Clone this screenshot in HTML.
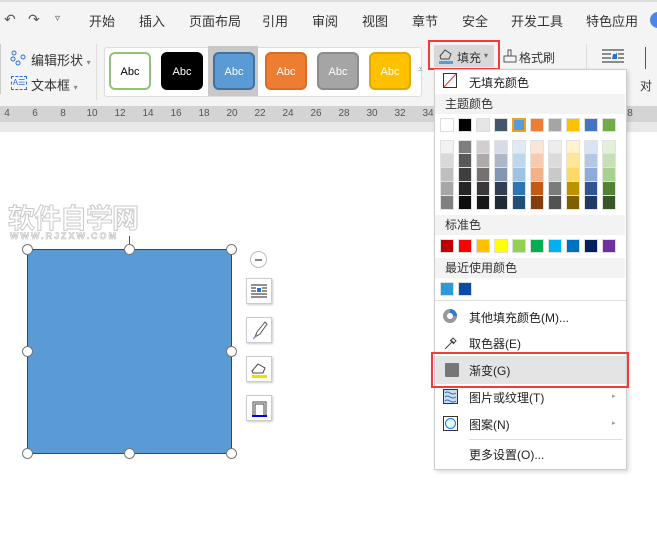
<!DOCTYPE html>
<html><head><meta charset="utf-8"><style>
*{margin:0;padding:0;box-sizing:border-box}
body{width:657px;height:546px;overflow:hidden;background:#fff;font-family:"Liberation Sans","Noto Sans CJK SC",sans-serif;font-size:12px;color:#333;position:relative}
.a{position:absolute}
.tab{position:absolute;top:11px;font-size:13px;color:#333}
.abc{position:absolute;top:52px;width:42px;height:38px;border-radius:6px;font-size:11px;text-align:center;line-height:36px;border:2px solid}
.rn{position:absolute;top:108px;font-size:10px;color:#555;width:16px;text-align:center}
.sw{position:absolute;width:14px;height:14px;border:1px solid #ddd}
.col{position:absolute;top:140px;width:14px}
.col div{height:14px;border:1px solid #e2e2e2;border-top:none}
.col div:first-child{border-top:1px solid #e2e2e2}
.hd{position:absolute;left:435px;width:190px;height:20px;background:#f3f3f3;font-size:12px;line-height:20px;padding-left:10px;color:#333}
.mi{position:absolute;left:469px;font-size:12px;color:#222}
.h{position:absolute;width:11px;height:11px;border-radius:50%;background:#fff;border:1px solid #777}
.sb{position:absolute;left:246px;width:26px;height:26px;background:#fff;border:1px solid #ccc;box-shadow:1px 1px 2px #ccc}
</style></head><body>
<div class="a" style="left:0;top:0;width:657px;height:106px;background:#f4f4f4"></div>
<div class="a" style="left:0;top:0;width:657px;height:2px;background:#ddd"></div>
<div class="tab" style="left:4px;font-size:14px;color:#555">↶</div>
<div class="tab" style="left:28px;font-size:14px;color:#555">↷</div>
<div class="tab" style="left:55px;font-size:10px;color:#555;top:13px">▿</div>
<div class="tab" style="left:89px">开始</div>
<div class="tab" style="left:139px">插入</div>
<div class="tab" style="left:189px">页面布局</div>
<div class="tab" style="left:262px">引用</div>
<div class="tab" style="left:312px">审阅</div>
<div class="tab" style="left:362px">视图</div>
<div class="tab" style="left:412px">章节</div>
<div class="tab" style="left:462px">安全</div>
<div class="tab" style="left:511px">开发工具</div>
<div class="tab" style="left:586px">特色应用</div>
<div class="a" style="left:650px;top:12px;width:16px;height:16px;border-radius:50%;background:#4a86e8"></div>
<div class="a" style="left:0;top:44px;width:1px;height:50px;background:#ccc"></div>
<svg class="a" style="left:10px;top:50px" width="16" height="16"><circle cx="4" cy="3" r="2" fill="none" stroke="#2a6fd6"/><circle cx="3" cy="9" r="2" fill="none" stroke="#2a6fd6"/><circle cx="13" cy="7" r="2" fill="none" stroke="#2a6fd6"/><circle cx="8" cy="13" r="2" fill="none" stroke="#2a6fd6"/></svg>
<div class="a" style="left:31px;top:50px;font-size:13px">编辑形状 <span style="font-size:8px;color:#888">▾</span></div>
<div class="a" style="left:11px;top:76px;width:16px;height:14px;border:1px dashed #2a6fd6;font-size:8px;color:#2a6fd6;line-height:12px;text-align:center">A☰</div>
<div class="a" style="left:31px;top:75px;font-size:13px">文本框 <span style="font-size:8px;color:#888">▾</span></div>
<div class="a" style="left:96px;top:44px;width:1px;height:56px;background:#ddd"></div>
<div class="a" style="left:104px;top:47px;width:318px;height:50px;background:#fff;border:1px solid #ddd;border-radius:3px"></div>
<div class="a" style="left:208px;top:46px;width:50px;height:50px;background:#c8c8c8"></div>
<div class="abc" style="left:109px;background:#fff;border-color:#92c27a;color:#000">Abc</div>
<div class="abc" style="left:161px;background:#000;border-color:#000;color:#fff">Abc</div>
<div class="abc" style="left:213px;background:#5b9bd5;border-color:#41719c;color:#fff">Abc</div>
<div class="abc" style="left:265px;background:#ed7d31;border-color:#d96d24;color:#fff">Abc</div>
<div class="abc" style="left:317px;background:#a5a5a5;border-color:#8c8c8c;color:#fff">Abc</div>
<div class="abc" style="left:369px;background:#ffc000;border-color:#e0a800;color:#fff">Abc</div>
<div class="a" style="left:418px;top:64px;font-size:9px;color:#888">⩡</div>
<div class="a" style="left:428px;top:40px;width:72px;height:30px;border:2px solid #f03c3c"></div>
<div class="a" style="left:434px;top:45px;width:60px;height:22px;background:#d8d8d8"></div>
<svg class="a" style="left:437px;top:47px" width="18" height="18"><path d="M3 9 L8 3 L14 7 L12 12 H4 Z" fill="none" stroke="#444"/><rect x="2" y="14" width="14" height="3" fill="#5b9bd5"/></svg>
<div class="a" style="left:457px;top:49px;font-size:12px">填充</div>
<div class="a" style="left:484px;top:51px;font-size:8px;color:#666">▾</div>
<svg class="a" style="left:502px;top:48px" width="16" height="16"><rect x="2" y="8" width="12" height="6" fill="none" stroke="#555"/><rect x="6" y="2" width="3" height="6" fill="none" stroke="#555"/></svg>
<div class="a" style="left:519px;top:49px;font-size:12px">格式刷</div>
<div class="a" style="left:586px;top:44px;width:1px;height:56px;background:#ddd"></div>
<svg class="a" style="left:601px;top:49px" width="24" height="16"><g stroke="#222"><path d="M1 1H23M1 5H10M1 9H10M1 13H23M17 5H23M17 9H23"/></g><path d="M11 10L12 5L15 5L16 3L16 10Z" fill="#2a6fd6"/></svg>
<div class="a" style="left:645px;top:47px;width:12px;height:22px;border-left:1px solid #555"></div>
<div class="a" style="left:640px;top:77px;font-size:12px">对</div>
<div class="a" style="left:0;top:106px;width:657px;height:16px;background:#d4d4d4"></div>
<div class="a" style="left:0;top:122px;width:657px;height:10px;background:#e8e8e8"></div>
<div class="rn" style="left:-1px">4</div><div class="rn" style="left:27px">6</div><div class="rn" style="left:55px">8</div><div class="rn" style="left:84px">10</div><div class="rn" style="left:112px">12</div><div class="rn" style="left:140px">14</div><div class="rn" style="left:168px">16</div><div class="rn" style="left:196px">18</div><div class="rn" style="left:224px">20</div><div class="rn" style="left:252px">22</div><div class="rn" style="left:280px">24</div><div class="rn" style="left:308px">26</div><div class="rn" style="left:336px">28</div><div class="rn" style="left:364px">30</div><div class="rn" style="left:392px">32</div><div class="rn" style="left:420px">34</div><div class="rn" style="left:622px">8</div>
<div class="a" style="left:0;top:132px;width:657px;height:414px;background:#fff"></div>
<div class="a" style="left:8px;top:197px;font-size:27px;font-weight:bold;color:#fff;-webkit-text-stroke:1px #c8c8c8;letter-spacing:-1px">软件自学网</div>
<div class="a" style="left:10px;top:231px;font-size:9px;font-weight:bold;color:#fff;-webkit-text-stroke:0.6px #bbb;letter-spacing:2px">WWW.RJZXW.COM</div>
<div class="a" style="left:129px;top:236px;width:1px;height:14px;background:#555"></div>
<div class="a" style="left:27px;top:249px;width:205px;height:205px;background:#5b9bd5;border:1px solid #2c4a6a"></div>
<div class="h" style="left:22px;top:244px"></div><div class="h" style="left:124px;top:244px"></div><div class="h" style="left:226px;top:244px"></div>
<div class="h" style="left:22px;top:346px"></div><div class="h" style="left:226px;top:346px"></div>
<div class="h" style="left:22px;top:448px"></div><div class="h" style="left:124px;top:448px"></div><div class="h" style="left:226px;top:448px"></div>
<div class="a" style="left:250px;top:251px;width:17px;height:17px;border-radius:50%;border:1px solid #bbb;background:#fff"><div style="margin:7px 4px;height:2px;background:#888"></div></div>
<div class="sb" style="top:278px"><svg width="24" height="24"><g stroke="#222"><path d="M4 6H20M4 9H9M4 12H9M4 15H20M4 18H20M15 9H20M15 12H20"/></g><rect x="10" y="9" width="4" height="4" fill="#2a6fd6"/></svg></div>
<div class="sb" style="top:317px"><svg width="24" height="24"><path d="M18 4L10 14L8 19L13 16L20 6Z" fill="none" stroke="#555"/><path d="M8 19L6 21L10 17Z" fill="#4a86e8" stroke="#4a86e8"/></svg></div>
<div class="sb" style="top:356px"><svg width="24" height="24"><path d="M5 14L11 7L18 11L16 16H6Z" fill="none" stroke="#444"/><rect x="5" y="18" width="15" height="3" fill="#f0e000"/></svg></div>
<div class="sb" style="top:395px"><svg width="24" height="24"><path d="M6 19V6H19V19M8 19V8H17V19" fill="none" stroke="#444"/><rect x="5" y="19" width="15" height="2" fill="#0000ee"/></svg></div>
<!-- menu -->
<div class="a" style="left:434px;top:69px;width:193px;height:401px;background:#fff;border:1px solid #ccc;box-shadow:2px 2px 4px rgba(0,0,0,.15)"></div>
<svg class="a" style="left:443px;top:73px" width="15" height="16"><rect x="0.5" y="0.5" width="13" height="14" fill="#fff" stroke="#333"/><path d="M13 1L1 14" stroke="#e33"/></svg>
<div class="mi" style="top:74px">无填充颜色</div>
<div class="hd" style="top:94px">主题颜色</div>
<div class="sw" style="left:440px;top:118px;background:#fff"></div>
<div class="sw" style="left:458px;top:118px;background:#000"></div>
<div class="sw" style="left:476px;top:118px;background:#e7e6e6"></div>
<div class="sw" style="left:494px;top:118px;background:#44546a"></div>
<div class="sw" style="left:512px;top:118px;background:#5b9bd5;border:2px solid #f0a020"></div>
<div class="sw" style="left:530px;top:118px;background:#ed7d31"></div>
<div class="sw" style="left:548px;top:118px;background:#a5a5a5"></div>
<div class="sw" style="left:566px;top:118px;background:#ffc000"></div>
<div class="sw" style="left:584px;top:118px;background:#4472c4"></div>
<div class="sw" style="left:602px;top:118px;background:#70ad47"></div>
<div class="col" style="left:440px"><div style="background:#f2f2f2"></div><div style="background:#d9d9d9"></div><div style="background:#bfbfbf"></div><div style="background:#a6a6a6"></div><div style="background:#808080"></div></div>
<div class="col" style="left:458px"><div style="background:#7f7f7f"></div><div style="background:#595959"></div><div style="background:#3f3f3f"></div><div style="background:#262626"></div><div style="background:#0d0d0d"></div></div>
<div class="col" style="left:476px"><div style="background:#d0cece"></div><div style="background:#aeaaaa"></div><div style="background:#757171"></div><div style="background:#3a3838"></div><div style="background:#171616"></div></div>
<div class="col" style="left:494px"><div style="background:#d6dce5"></div><div style="background:#adb9ca"></div><div style="background:#8497b0"></div><div style="background:#333f50"></div><div style="background:#222a35"></div></div>
<div class="col" style="left:512px"><div style="background:#deebf7"></div><div style="background:#bdd7ee"></div><div style="background:#9dc3e6"></div><div style="background:#2e75b6"></div><div style="background:#1f4e79"></div></div>
<div class="col" style="left:530px"><div style="background:#fbe5d6"></div><div style="background:#f8cbad"></div><div style="background:#f4b183"></div><div style="background:#c55a11"></div><div style="background:#843c0c"></div></div>
<div class="col" style="left:548px"><div style="background:#ededed"></div><div style="background:#dbdbdb"></div><div style="background:#c9c9c9"></div><div style="background:#7b7b7b"></div><div style="background:#525252"></div></div>
<div class="col" style="left:566px"><div style="background:#fff2cc"></div><div style="background:#ffe699"></div><div style="background:#ffd966"></div><div style="background:#bf9000"></div><div style="background:#7f6000"></div></div>
<div class="col" style="left:584px"><div style="background:#dae3f3"></div><div style="background:#b4c7e7"></div><div style="background:#8faadc"></div><div style="background:#2f5597"></div><div style="background:#203864"></div></div>
<div class="col" style="left:602px"><div style="background:#e2f0d9"></div><div style="background:#c5e0b4"></div><div style="background:#a9d18e"></div><div style="background:#548235"></div><div style="background:#385723"></div></div>
<div class="hd" style="top:215px">标准色</div>
<div class="sw" style="left:440px;top:239px;background:#c00000"></div>
<div class="sw" style="left:458px;top:239px;background:#ff0000"></div>
<div class="sw" style="left:476px;top:239px;background:#ffc000"></div>
<div class="sw" style="left:494px;top:239px;background:#ffff00"></div>
<div class="sw" style="left:512px;top:239px;background:#92d050"></div>
<div class="sw" style="left:530px;top:239px;background:#00b050"></div>
<div class="sw" style="left:548px;top:239px;background:#00b0f0"></div>
<div class="sw" style="left:566px;top:239px;background:#0070c0"></div>
<div class="sw" style="left:584px;top:239px;background:#002060"></div>
<div class="sw" style="left:602px;top:239px;background:#7030a0"></div>
<div class="hd" style="top:258px">最近使用颜色</div>
<div class="sw" style="left:440px;top:282px;background:#2a9ad8"></div>
<div class="sw" style="left:458px;top:282px;background:#0b4aa8"></div>
<div class="a" style="left:435px;top:300px;width:191px;height:1px;background:#ddd"></div>
<svg class="a" style="left:442px;top:308px" width="16" height="16"><circle cx="8" cy="8" r="7" fill="#999"/><path d="M8 1A7 7 0 0 1 15 8H8Z" fill="#2a7ad8"/><circle cx="8" cy="8" r="3" fill="#fff"/></svg>
<div class="mi" style="top:309px">其他填充颜色(M)...</div>
<svg class="a" style="left:443px;top:335px" width="16" height="16"><path d="M2 14L9 7M7 5L11 9M10 3L13 6L11 8L8 5Z" fill="none" stroke="#444"/></svg>
<div class="mi" style="top:335px">取色器(E)</div>
<div class="a" style="left:435px;top:356px;width:191px;height:28px;background:#e4e4e4"></div>
<div class="a" style="left:431px;top:352px;width:198px;height:36px;border:2px solid #f03c3c"></div>
<div class="a" style="left:445px;top:363px;width:14px;height:14px;background:#777;border-radius:1px"></div>
<div class="mi" style="top:362px">渐变(G)</div>
<svg class="a" style="left:443px;top:389px" width="16" height="16"><rect x="0.5" y="0.5" width="14" height="14" fill="#cde" stroke="#333"/><path d="M2 4Q4 2 7 4T13 4M2 8Q4 6 7 8T13 8M2 12Q4 10 7 12T13 12" fill="none" stroke="#2a6fd6"/></svg>
<div class="mi" style="top:389px">图片或纹理(T)</div>
<div class="a" style="left:612px;top:392px;font-size:7px;color:#999">▸</div>
<svg class="a" style="left:443px;top:416px" width="16" height="16"><rect x="0.5" y="0.5" width="14" height="14" fill="#fff" stroke="#333"/><circle cx="7.5" cy="7.5" r="5" fill="#dff" stroke="#2a6fd6"/></svg>
<div class="mi" style="top:416px">图案(N)</div>
<div class="a" style="left:612px;top:419px;font-size:7px;color:#999">▸</div>
<div class="a" style="left:469px;top:439px;width:153px;height:1px;background:#ddd"></div>
<div class="mi" style="top:446px">更多设置(O)...</div>
</body></html>
